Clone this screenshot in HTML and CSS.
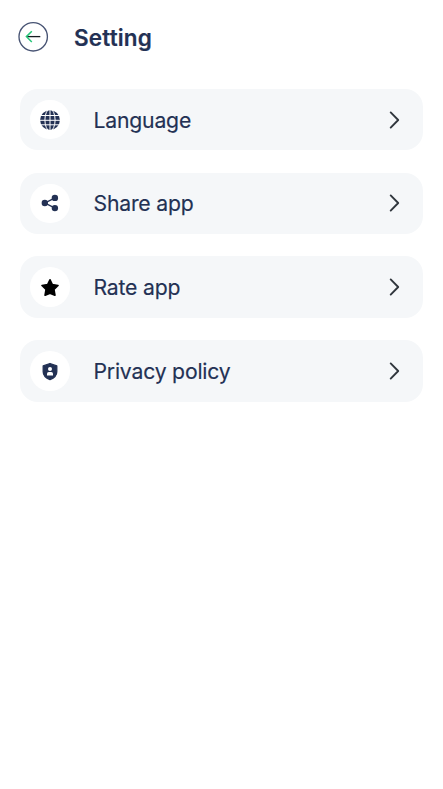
FILE: index.html
```html
<!DOCTYPE html>
<html lang="en">
<head>
<meta charset="utf-8">
<title>Setting</title>
<link rel="stylesheet" href="styles.css">
</head>
<body>
<header class="header">
  <button class="back" aria-label="Back">
    <svg width="32" height="32" viewBox="0 0 32 32" fill="none"><circle cx="16.2" cy="15.8" r="14.2" stroke="#475373" stroke-width="1.35"/><path d="M10 15.6H23.3" stroke="#151b20" stroke-width="1.3"/><path d="M14.8 10.2L9.4 15.6L14.8 21" stroke="#27c579" stroke-width="1.5"/></svg>
  </button>
  <h1 class="title">Setting</h1>
</header>
<main class="list">
  <a class="row"><span class="badge"><svg class="icon" viewBox="0 0 20 20"><circle cx="10" cy="10.1" r="9.9" fill="#233154"/><g fill="none" stroke="#fff" stroke-width="1"><ellipse cx="10" cy="10" rx="5.1" ry="11"/><path d="M10 0V20M0 10.3H20M0 5.5H20M0 14.8H20"/></g></svg></span><span class="label">Language</span><svg class="chevron" viewBox="0 0 12 20"><path d="M2.7 2.4L10.2 10L2.7 17.6"/></svg></a>
  <a class="row"><span class="badge"><svg class="icon" viewBox="0 0 20 20"><path d="M15 4.9L5 10L15 15.1" fill="none" stroke="#233154" stroke-width="1.4"/><g fill="#233154"><circle cx="14.9" cy="4.9" r="3.2"/><circle cx="4.8" cy="10" r="3.2"/><circle cx="14.9" cy="15.1" r="3.2"/></g></svg></span><span class="label">Share app</span><svg class="chevron" viewBox="0 0 12 20"><path d="M2.7 2.4L10.2 10L2.7 17.6"/></svg></a>
  <a class="row"><span class="badge"><svg class="icon" viewBox="0 0 20 20"><path d="M10 2.8L12.3 7.7L18 8.5L13.9 12.5L14.9 18.2L10 16.2L5.1 18.2L6.1 12.5L2 8.5L7.7 7.7Z" stroke="#000" stroke-width="1.7" stroke-linejoin="round"/></svg></span><span class="label">Rate app</span><svg class="chevron" viewBox="0 0 12 20"><path d="M2.7 2.4L10.2 10L2.7 17.6"/></svg></a>
  <a class="row"><span class="badge"><svg class="icon" viewBox="0 0 20 20"><path d="M10 2.5L16.8 4.9V10.8C16.8 14.7 14 17.1 10 18.7C6 17.1 3.2 14.7 3.2 10.8V4.9Z" fill="#233154" stroke="#233154" stroke-width="1.3" stroke-linejoin="round"/><circle cx="10" cy="8" r="2" fill="#fff"/><path d="M7 14.4V12.6Q7 10.9 8.8 10.9H11.2Q13 10.9 13 12.6V14.4Z" fill="#fff"/></svg></span><span class="label">Privacy policy</span><svg class="chevron" viewBox="0 0 12 20"><path d="M2.7 2.4L10.2 10L2.7 17.6"/></svg></a>
</main>
</body>
</html>
```
FILE: styles.css
```css
* { box-sizing: border-box; }
body { margin: 0; background: #fff; color: #233154; font-family: Inter, sans-serif; }
.header { display: flex; align-items: center; height: 74px; padding-left: 17px; gap: 25px; }
.back { width: 32px; height: 32px; padding: 0; border: 0; background: none; }
.back svg { display: block; }
.title { margin: 0; padding-top: 1px; font-size: 22.5px; line-height: 30px; font-weight: 600; letter-spacing: 0.15px; -webkit-text-stroke: 0.2px #233154; }
.list { display: flex; flex-direction: column; gap: 22.1px; padding: 14.8px 20px; }
.row { display: flex; align-items: center; height: 61.7px; padding: 0 22.6px 0 10.4px; border-radius: 18px; background: #f5f7f9; }
.badge { display: grid; place-items: center; width: 39.5px; height: 39.5px; border-radius: 50%; background: #fff; }
.icon { width: 20px; height: 20px; }
.label { flex: 1; margin-left: 23.6px; font-size: 21.2px; line-height: 30px; font-weight: 400; letter-spacing: -0.2px; -webkit-text-stroke: 0.15px #233154; }
.chevron { width: 12px; height: 20px; fill: none; stroke: #30363d; stroke-width: 1.9; stroke-linecap: round; stroke-linejoin: round; }
```
